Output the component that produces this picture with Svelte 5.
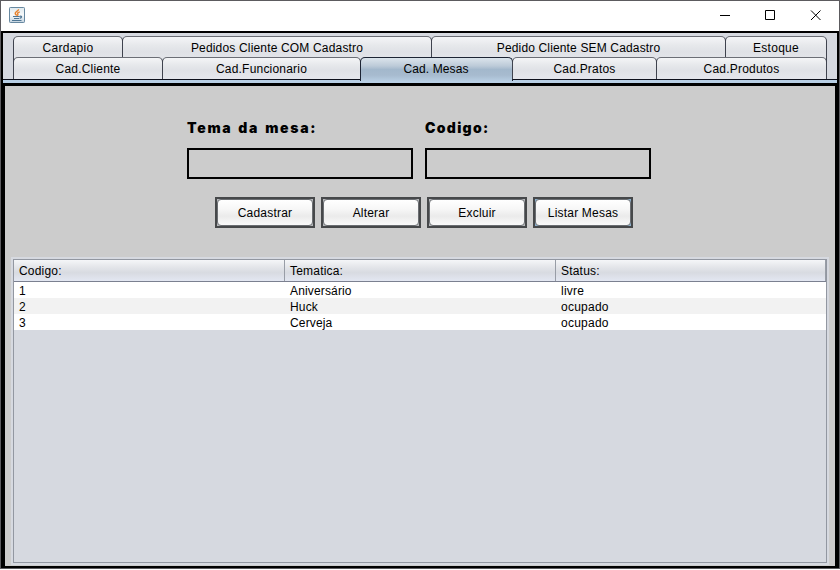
<script>
  const topTabs = [
    { label: 'Cardapio', width: 110, spacing: 0.3 },
    { label: 'Pedidos Cliente COM Cadastro', width: 310, spacing: 0.17 },
    { label: 'Pedido Cliente SEM Cadastro', width: 295, spacing: 0.15 },
    { label: 'Estoque', width: 102, spacing: 0.3 }
  ];
  const bottomTabs = [
    { label: 'Cad.Cliente', width: 150, spacing: 0.2 },
    { label: 'Cad.Funcionario', width: 199, spacing: 0.2 },
    { label: 'Cad. Mesas', width: 153, spacing: 0.12 },
    { label: 'Cad.Pratos', width: 145, spacing: 0.2 },
    { label: 'Cad.Produtos', width: 171, spacing: 0.2 }
  ];
  const columns = ['Codigo:', 'Tematica:', 'Status:'];
  const rows = [
    ['1', 'Aniversário', 'livre'],
    ['2', 'Huck', 'ocupado'],
    ['3', 'Cerveja', 'ocupado']
  ];
  let active = $state('Cad. Mesas');
  let tema = $state('');
  let codigo = $state('');
</script>

<div class="window">
  <header class="titlebar">
    <svg class="java" width="16" height="16" viewBox="0 0 16 16">
      <defs>
        <linearGradient id="jbg" x1="0" y1="0" x2="0" y2="1">
          <stop offset="0" stop-color="#dfe9ee" /><stop offset="0.5" stop-color="#f7f9fa" /><stop offset="1" stop-color="#c3d3df" />
        </linearGradient>
      </defs>
      <rect x="0.5" y="0.5" width="15" height="15" rx="0.8" fill="url(#jbg)" stroke="#6788a0" />
      <path d="M9.6 2.2C9.7 4.1 5.8 4.8 6.2 6.6C6.4 7.5 7.5 7.8 7.6 8.6M10.8 4.8C8.4 5.6 8.2 6.4 8.8 7.2C9.2 7.8 8.9 8.3 8.3 8.7" fill="none" stroke="#e7822d" stroke-width="1.4" />
      <path d="M4 9.5H10.6M5 11.5H10M10.8 9.3C13.4 8.6 13 10.8 10.6 11.4M3 13.5H12.5" fill="none" stroke="#4f7694" stroke-width="1.2" />
    </svg>
    <svg class="controls" width="102" height="12" viewBox="0 0 102 12" fill="none" stroke="#000">
      <path d="M0 5.5H10M45.5 0.5H54.5V9.5H45.5Z" />
      <path d="M91 0.5L100.5 10M100.5 0.5L91 10" />
    </svg>
  </header>

  <div class="pane">
    <nav class="tabs">
      {#each [topTabs, bottomTabs] as run, i}
        <div class="run" class:front={i === 1}>
          {#each run as tab}
            <button
              class="tab"
              class:active={tab.label === active}
              style:width="{tab.width}px"
              style:letter-spacing="{tab.spacing}px"
              onclick={() => (active = tab.label)}>{tab.label}</button>
          {/each}
        </div>
      {/each}
    </nav>
    <div class="strip"></div>

    <main class="content">
      <div class="fields">
        <label class="tema">Tema da mesa:<input bind:value={tema} /></label>
        <label>Codigo:<input bind:value={codigo} /></label>
      </div>
      <div class="actions">
        {#each ['Cadastrar', 'Alterar', 'Excluir', 'Listar Mesas'] as action}
          <button class="action" class:blue={action === 'Listar Mesas'}><span>{action}</span></button>
        {/each}
      </div>
      <div class="scroll">
        <div class="table">
          <div class="row head">
            {#each columns as c}<div class="cell">{c}</div>{/each}
          </div>
          {#each rows as r, i}
            <div class="row" class:alt={i % 2 === 1}>
              {#each r as c}<div class="cell">{c}</div>{/each}
            </div>
          {/each}
        </div>
      </div>
    </main>
  </div>
</div>

<style>
  .window {
    box-sizing: border-box;
    width: 840px;
    height: 569px;
    border: 1px solid #5c5b5f;
    background: #fff;
    display: flex;
    flex-direction: column;
    font: 12px/16px 'Liberation Sans', Arial, sans-serif;
    color: #000;
    overflow: hidden;
  }
  .titlebar {
    height: 30px;
    flex: none;
    display: flex;
    justify-content: space-between;
    align-items: flex-start;
    box-sizing: border-box;
    padding: 6px 17px 0 8px;
  }
  .controls { margin-top: 3px; }
  .pane {
    flex: 1;
    display: flex;
    flex-direction: column;
    border: 2px solid #000;
    border-bottom: 0;
    background: #d6d9e0;
  }
  .tabs {
    height: 47px;
    flex: none;
    box-sizing: border-box;
    padding: 3px 9px 0 10px;
    border-bottom: 1px solid #0d101c;
  }
  .run { display: flex; height: 21px; }
  .run.front { height: 23px; }
  .tab {
    box-sizing: border-box;
    flex: none;
    margin: 0 -1px 0 0;
    padding: 0 0 1px 0;
    border: 1px solid #3f434e;
    border-top-color: #6b6e76;
    border-bottom: 0;
    border-radius: 5px 5px 0 0;
    background: linear-gradient(#f4f5f7, #e6e8eb 35%, #dfe1e6 60%, #e4e6ec);
    font: inherit;
    color: inherit;
  }
  .run:not(.front) .tab { height: 26px; padding-bottom: 4px; }
  .front .tab { position: relative; height: 22px; padding-bottom: 0; }
  .front .tab.active {
    height: 24px;
    padding-right: 1px;
    padding-bottom: 2px;
    border-color: #1c2434;
    background: linear-gradient(#dbe4ec, #bccad8 35%, #a3b8cc 50%, #a7bbcf 75%, #b7cde2);
  }
  .strip { height: 3px; flex: none; background: #b8cfe5; }
  .content {
    flex: 1;
    display: flex;
    flex-direction: column;
    align-items: center;
    border: 2px solid #000;
    border-top-width: 3px;
    background: #ccc;
  }
  .fields { display: flex; gap: 12px; margin: 32px 2px 0 0; }
  .fields label {
    display: flex;
    flex-direction: column;
    font-family: Inter, 'Liberation Sans', sans-serif;
    font-size: 14px;
    font-weight: 900;
    line-height: 20px;
    letter-spacing: 1.3px;
  }
  .fields .tema { letter-spacing: 1.7px; word-spacing: 1.5px; }
  .fields input {
    box-sizing: border-box;
    width: 226px;
    height: 31px;
    margin: 10px 0 0;
    border: 2px solid #000;
    background: transparent;
    outline: none;
  }
  .actions { display: flex; gap: 6px; margin: 18px 0 29px 8px; }
  .action {
    box-sizing: border-box;
    width: 100px;
    height: 31px;
    padding: 0;
    border: 2px solid #46484a;
    background: #b9bbbe;
    font: inherit;
    letter-spacing: 0.2px;
    color: inherit;
    display: flex;
  }
  .action.blue { background: #8fb2cf; }
  .action span {
    box-sizing: border-box;
    width: 96px;
    height: 27px;
    padding: 1px 0 0 0;
    border: 1px solid #6b6e72;
    border-radius: 4px;
    background: linear-gradient(#fff, #f7f7f7 35%, #ebebeb 65%, #fafafa);
    line-height: 25px;
    text-align: center;
  }
  .scroll {
    box-sizing: border-box;
    width: 818px;
    height: 308px;
    border: 2px solid #d6d9e0;
    background: #d6d9e0;
  }
  .table {
    box-sizing: border-box;
    height: 304px;
    border: 1px solid #9297a1;
  }
  .row { display: flex; height: 16px; background: #fff; }
  .row.alt { background: #f2f2f2; }
  .row.head {
    height: 21px;
    border-bottom: 1px solid #7b8090;
    background: linear-gradient(#f5f6f8, #e3e5e9 35%, #d8dbe1 60%, #e3e7f2);
  }
  .cell {
    box-sizing: border-box;
    width: 271px;
    padding: 1px 0 0 5px;
    white-space: nowrap;
    letter-spacing: 0.15px;
  }
  .cell:last-child { width: 270px; letter-spacing: 0.25px; }
  .head .cell { border-right: 1px solid #989da6; padding-top: 3px; line-height: 16px; letter-spacing: 0.2px; }
</style>
